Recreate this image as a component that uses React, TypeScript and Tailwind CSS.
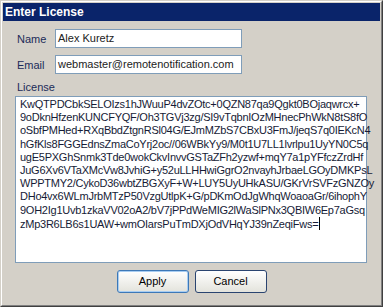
import React from "react";

const lines = [
  "KwQTPDCbkSELOIzs1hJWuuP4dvZOtc+0QZN87qa9Qgkt0BOjaqwrcx+",
  "9oDknHfzenKUNCFYQF/Oh3TGVj3zg/SI9vTqbnIOzMHnecPhWkN8tS8fO",
  "oSbfPMHed+RXqBbdZtgnRSl04G/EJmMZbS7CBxU3FmJ/jeqS7q0IEKcN4",
  "hGfKls8FGGEdnsZmaCoYrj2oc//06WBkYy9/M0t1U7LL1lvrlpu1UyYN0C5q",
  "ugE5PXGhSnmk3Tde0wokCkvInvvGSTaZFh2yzwf+mqY7a1pYFfczZrdHf",
  "JuG6Xv6VTaXMcVw8JvhiG+y52uLLHHwiGgrO2nvayhJrbaeLGOyDMKPsL",
  "WPPTMY2/CykoD36wbtZBGXyF+W+LUY5UyUHkASU/GKrVrSVFzGNZOy",
  "DHo4vx6WLmJrbMTzP50VzgUtlpK+G/pDKmOdJgWhqWoaoaGr/6ihophY",
  "9OH2Ig1Uvb1zkaVV02oA2/bV7jPPdWeMIG2lWaSlPNx3QBIW6Ep7aGsq",
  "zMp3R6LB6s1UAW+wmOIarsPuTmDXjOdVHqYJ39nZeqiFws=",
];

const font = { fontFamily: '"Liberation Sans", Arial, sans-serif' };

export default function App() {
  return (
    <div className="w-[383px] h-[307px] border-t border-l border-[#d4d0c8] border-r border-b border-r-[#404040] border-b-[#404040] bg-[#d4d0c8]" style={font}>
      <div className="h-full border-t border-l border-white border-r border-b border-r-[#808080] border-b-[#808080] pt-[1px] pl-[1px] pr-[1px] flex flex-col">
        <div className="h-[18px] bg-[#0a246a] flex items-center pl-[2px] text-white font-bold text-[12px]">
          Enter License
        </div>
        <div className="flex flex-col pl-[12px] pr-[13px] text-[11px] text-[#1b2b58]">
          <div className="flex items-center mt-[8px]">
            <div className="w-[40px] pl-[2px] pt-[2px]">Name</div>
            <div className="w-[187px] h-[19px] border border-[#7f9db9] bg-white flex items-center pl-[2px] text-[#222]">
              Alex Kuretz
            </div>
          </div>
          <div className="flex items-center mt-[7px]">
            <div className="w-[40px] pl-[2px] pt-[2px]">Email</div>
            <div className="w-[187px] h-[19px] border border-[#7f9db9] bg-white flex items-center pl-[2px] text-[#222]">
              webmaster@remotenotification.com
            </div>
          </div>
          <div className="mt-[7px] pl-[2px] leading-[13px]">License</div>
          <div className="mt-[2px] w-[352px] h-[167px] border border-[#7f9db9] bg-white pl-[4px] pt-[1px] text-[#161b36] tracking-[-0.25px]">
            {lines.map((l, i) => (
              <div key={i} className="leading-[13.2px] whitespace-nowrap">
                {l}
                {i === lines.length - 1 && (
                  <span className="inline-block w-[1px] h-[13px] bg-black align-[-2px] ml-[1px]" />
                )}
              </div>
            ))}
          </div>
          <div className="mt-[7px] flex justify-center gap-[6px] pl-[1px]">
            <button className="w-[72px] h-[23px] rounded-[3px] border border-[#3d78b7] bg-gradient-to-b from-white to-[#e3e3dc] shadow-[inset_0_0_0_1px_#a8cdf2] text-black text-[11px]">
              Apply
            </button>
            <button className="w-[72px] h-[23px] rounded-[3px] border border-[#2a4470] bg-gradient-to-b from-white to-[#e3e3dc] text-black text-[11px]">
              Cancel
            </button>
          </div>
        </div>
      </div>
    </div>
  );
}
